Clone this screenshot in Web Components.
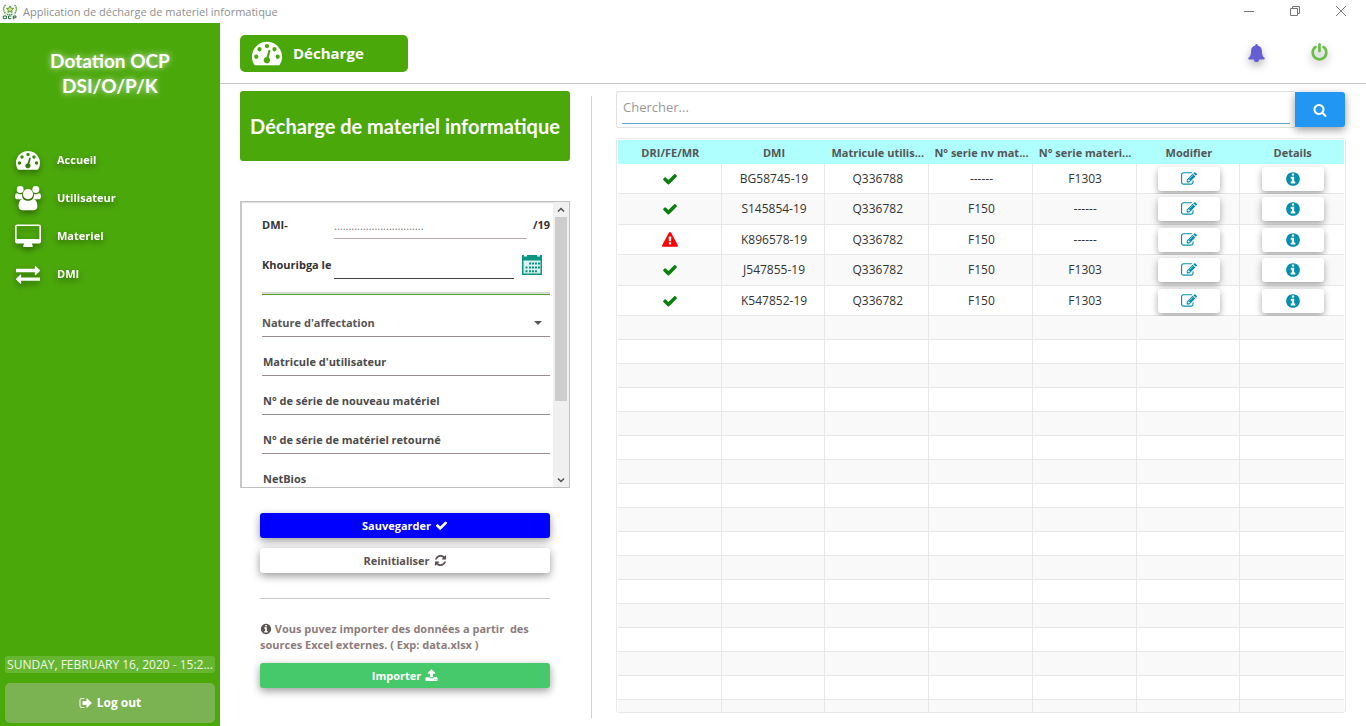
<!DOCTYPE html>
<html lang="fr">
<head>
<meta charset="utf-8">
<title>Application de décharge de materiel informatique</title>
<style>
  :root {
    --green: #4ba80b;
    --teal: #048fae;
    --line: #c8c8c8;
    --grid: #e8e8e8;
    --shadow: 0 3px 8px rgba(0, 0, 0, .4);
  }
  body { margin: 0; font: 12px/16px "Open Sans", "Noto Sans", sans-serif; color: #333; background: #fff; }
</style>
</head>
<body>
<oc-app></oc-app>

<script>
const define = (name, html, setup) => {
  const tpl = document.createElement('template');
  tpl.innerHTML = html.trim();
  customElements.define(name, class extends HTMLElement {
    constructor() {
      super();
      this.attachShadow({ mode: 'open' }).append(tpl.content.cloneNode(true));
    }
    connectedCallback() { if (setup) setup(this, this.shadowRoot); }
  });
};

/* ---------- icons ---------- */
const P = d => ['0 0 1792 1792', `<path d="${d}"/>`];
const ICONS = {
  check: P('M1671 566q0 40-28 68l-724 724-136 136q-28 28-68 28t-68-28l-136-136-362-362q-28-28-28-68t28-68l136-136q28-28 68-28t68 28l294 295 656-657q28-28 68-28t68 28l136 136q28 28 28 68z'),
  search: P('M1216 832q0-185-131.5-316.5t-316.5-131.5-316.5 131.5-131.5 316.5 131.5 316.5 316.5 131.5 316.5-131.5 131.5-316.5zm512 832q0 52-38 90t-90 38q-54 0-90-38l-343-342q-179 124-399 124-143 0-273.5-55.5t-225-150-150-225-55.5-273.5 55.5-273.5 150-225 225-150 273.5-55.5 273.5 55.5 225 150 150 225 55.5 273.5q0 220-124 399l343 343q37 37 37 90z'),
  info: P('M1152 1376v-160q0-14-9-23t-23-9h-96v-512q0-14-9-23t-23-9h-320q-14 0-23 9t-9 23v160q0 14 9 23t23 9h96v320h-96q-14 0-23 9t-9 23v160q0 14 9 23t23 9h448q14 0 23-9t9-23zm-128-896v-160q0-14-9-23t-23-9h-192q-14 0-23 9t-9 23v160q0 14 9 23t23 9h192q14 0 23-9t9-23zm640 416q0 209-103 385.5t-279.5 279.5-385.5 103-385.5-103-279.5-279.5-103-385.5 103-385.5 279.5-279.5 385.5-103 385.5 103 279.5 279.5 103 385.5z'),
  power: P('M1664 896q0 156-61 298t-164 245-245 164-298 61-298-61-245-164-164-245-61-298q0-182 80.5-343t226.5-270q43-32 95.5-25t83.5 50q32 42 24.5 94.5t-49.5 84.5q-98 74-151.5 181t-53.5 228q0 104 40.5 198.5t109.5 163.5 163.5 109.5 198.5 40.5 198.5-40.5 163.5-109.5 109.5-163.5 40.5-198.5q0-121-53.5-228t-151.5-181q-42-32-49.5-84.5t24.5-94.5q31-43 84-50t95 25q146 109 226.5 270t80.5 343zm-640-768v640q0 52-38 90t-90 38-90-38-38-90v-640q0-52 38-90t90-38 90 38 38 90z'),
  warning: P('M1024 1375v-190q0-14-9.5-23.5t-22.5-9.5h-192q-13 0-22.5 9.5t-9.5 23.5v190q0 14 9.5 23.5t22.5 9.5h192q13 0 22.5-9.5t9.5-23.5zm-2-374l18-459q0-12-10-19-13-11-24-11h-220q-11 0-24 11-10 7-10 21l17 457q0 10 10 16.5t24 6.5h185q14 0 23.5-6.5t10.5-16.5zm-14-934l768 1408q35 63-2 126-17 29-46.5 46t-63.5 17h-1536q-34 0-63.5-17t-46.5-46q-37-63-2-126l768-1408q17-31 47-49t65-18 65 18 47 49z'),
  signout: P('M704 1440q0 4 1 20t.5 26.5-3 23.5-10 19.5-20.5 6.5h-320q-119 0-203.5-84.5t-84.5-203.5v-704q0-119 84.5-203.5t203.5-84.5h320q13 0 22.5 9.5t9.5 22.5q0 4 1 20t.5 26.5-3 23.5-10 19.5-20.5 6.5h-320q-66 0-113 47t-47 113v704q0 66 47 113t113 47h312l11.5 1 11.5 3 8 5.5 7 9 2 13.5zm928-544q0 26-19 45l-544 544q-19 19-45 19t-45-19-19-45v-288h-448q-26 0-45-19t-19-45v-384q0-26 19-45t45-19h448v-288q0-26 19-45t45-19 45 19l544 544q19 19 19 45z'),
  upload: P('M1344 1472q0-26-19-45t-45-19-45 19-19 45 19 45 45 19 45-19 19-45zm256 0q0-26-19-45t-45-19-45 19-19 45 19 45 45 19 45-19 19-45zm128-224v320q0 40-28 68t-68 28h-1472q-40 0-68-28t-28-68v-320q0-40 28-68t68-28h427q21 56 70.5 92t110.5 36h256q61 0 110.5-36t70.5-92h427q40 0 68 28t28 68zm-325-648q-17 40-59 40h-256v448q0 26-19 45t-45 19h-256q-26 0-45-19t-19-45v-448h-256q-42 0-59-40-17-39 14-69l448-448q18-19 45-19t45 19l448 448q31 30 14 69z'),
  refresh: P('M1639 1056q0 5-1 7-64 268-268 434.5t-478 166.5q-146 0-282.5-55t-243.5-157l-129 129q-19 19-45 19t-45-19-19-45v-448q0-26 19-45t45-19h448q26 0 45 19t19 45-19 45l-137 137q71 66 161 102t187 36q134 0 250-65t186-179q11-17 53-117 8-23 30-23h192q13 0 22.5 9.5t9.5 22.5zm25-800v448q0 26-19 45t-45 19h-448q-26 0-45-19t-19-45 19-45l138-138q-148-137-349-137-134 0-250 65t-186 179q-11 17-53 117-8 23-30 23h-199q-13 0-22.5-9.5t-9.5-22.5v-7q65-268 270-434.5t480-166.5q146 0 284 55.5t245 156.5l130-129q19-19 45-19t45 19 19 45z'),
  edit: P('M888 1184l116-116-152-152-116 116v56h96v96h56zm440-720q-16-16-33 1l-350 350q-17 17-1 33t33-1l350-350q17-17 1-33zm80 594v190q0 119-84.5 203.5t-203.5 84.5h-832q-119 0-203.5-84.5t-84.5-203.5v-832q0-119 84.5-203.5t203.5-84.5h832q63 0 117 25 15 7 18 23 3 17-9 29l-49 49q-14 14-32 8-23-6-45-6h-832q-66 0-113 47t-47 113v832q0 66 47 113t113 47h832q66 0 113-47t47-113v-126q0-13 9-22l64-64q15-15 35-7t20 29zm-96-738l288 288-672 672h-288v-288zm444 132l-92 92-288-288 92-92q28-28 68-28t68 28l152 152q28 28 28 68t-28 68z'),
  exchange: P('M1792 1184v192q0 13-9.5 22.5t-22.5 9.5h-1376v192q0 13-9.5 22.5t-22.5 9.5q-12 0-24-10l-319-320q-9-9-9-22 0-14 9-23l320-320q9-9 23-9 13 0 22.5 9.5t9.5 22.5v192h1376q13 0 22.5 9.5t9.5 22.5zm0-544q0 14-9 23l-320 320q-9 9-23 9-13 0-22.5-9.5t-9.5-22.5v-192h-1376q-13 0-22.5-9.5t-9.5-22.5v-192q0-13 9.5-22.5t22.5-9.5h1376v-192q0-14 9-23t23-9q12 0 24 10l319 319q9 9 9 23z'),
  gauge: ['0 0 28 28', `<path fill-rule="evenodd" d="M14 3.500A14 14 0 0 0 0 17.500c0 2.700.8 5.200 2.100 7.400.2.300.5.500.9.500h22c.4 0 .7-.2.900-.5A14 14 0 0 0 14 3.500zM4 15.500a2 2 0 1 1 0 4 2 2 0 0 1 0-4zM7 8.500a2 2 0 1 1 0 4 2 2 0 0 1 0-4zM14 5.500a2 2 0 1 1 0 4 2 2 0 0 1 0-4zM21 8.500a2 2 0 1 1 0 4 2 2 0 0 1 0-4zM24 15.500a2 2 0 1 1 0 4 2 2 0 0 1 0-4zM16.500 11c.5.100.8.700.7 1.200l-1.600 6a3 3 0 1 1-2-.5l1.700-6c.1-.5.700-.8 1.200-.7z"/>`],
  users: ['0 0 30 30', `<circle cx="6" cy="5.200" r="4"/><circle cx="24" cy="5.200" r="4"/><path d="M2.500 9.500c1 .8 2 1.200 3.500 1.200.8 0 1.500-.1 2.200-.4-.3 2.300.3 4.400 1.700 6.200H3.500C1.300 16.500 0 15.300 0 13.500 0 12 .4 8.700 2.500 9.500zM27.500 9.500c-1 .8-2 1.200-3.500 1.200-.8 0-1.500-.1-2.200-.4.3 2.300-.3 4.400-1.700 6.200h6.400c2.200 0 3.500-1.200 3.500-3 0-1.500-.4-4.800-2.500-4z"/><circle cx="15" cy="10.500" r="5.900"/><path d="M9.300 16.200c1.500 1.300 3.400 2.100 5.700 2.100s4.200-.8 5.700-2.100c4 .3 5.100 4.600 5.100 8.300 0 2.800-1.700 4.500-4.500 4.500H8.700c-2.800 0-4.500-1.700-4.500-4.500 0-3.700 1.100-8 5.100-8.300z"/>`],
  desktop: ['0 0 26 26', `<path fill-rule="evenodd" d="M2 1.500h22a2 2 0 0 1 2 2v15a2 2 0 0 1-2 2h-7c0 1.400.9 1.900.9 2.700 0 .5-.4.800-.9.800H9c-.5 0-.9-.3-.9-.8 0-.8.900-1.300.9-2.700H2a2 2 0 0 1-2-2v-15a2 2 0 0 1 2-2zm-.4 2v12c0 .3.200.5.400.5h22c.200 0 .4-.2.400-.5v-12c0-.3-.2-.5-.4-.5H2c-.200 0-.4.200-.4.500z"/>`],
  bell: ['0 0 20 20', `<path d="M10 1c.7 0 1.200.5 1.200 1.200v.5c3 .6 4.500 2.900 4.500 5.800 0 4.300 1 6 3 7.400.2 1-.4 1.500-1 1.500h-5a2.700 2.700 0 0 1-5.400 0h-5c-.6 0-1.200-.5-1-1.500 2-1.400 3-3.100 3-7.400 0-2.900 1.500-5.200 4.500-5.800v-.5C8.800 1.500 9.300 1 10 1z"/>`],
  calendar: ['0 0 20 20', `<path d="M0 0h2v1.500h3V0h10v1.500h3V0h2v20H0z"/><path d="M1.500 5.500h17v13h-17z" fill="#d9f3ee"/><path d="M7 7.500h2v2H7zm3 0h2v2h-2zm3 0h2v2h-2zm3 0h2v2h-2zM3.500 11.500h2v2h-2zm3.500 0h2v2H7zm3 0h2v2h-2zm3 0h2v2h-2zm3 0h2v2h-2zM3.500 15.200h2v2h-2zm3.500 0h2v2H7zm3 0h2v2h-2zm3 0h2v2h-2z"/>`],
  minimize: ['0 0 12 12', `<path d="M1 6.500h10" fill="none" stroke="currentColor"/>`],
  restore: ['0 0 12 12', `<path d="M1.500 3.500h7v7h-7zM3.500 3.500v-2h7v7h-2" fill="none" stroke="currentColor"/>`],
  close: ['0 0 12 12', `<path d="M1 1l10 10M11 1L1 11" fill="none" stroke="currentColor"/>`],
  up: ['0 0 10 10', `<path d="M2 6.500L5 3.500l3 3" fill="none" stroke="currentColor" stroke-width="1.500"/>`],
  down: ['0 0 10 10', `<path d="M2 3.500l3 3 3-3" fill="none" stroke="currentColor" stroke-width="1.500"/>`],
  crest: ['0 0 18 18', `<path d="M9 2.200l1.200 2.500 2.700.3-2 1.900.5 2.700L9 8.300 6.600 9.600l.5-2.700-2-1.900 2.700-.3z" fill="#dbe36a" stroke="#3f8f3a" stroke-width="1"/><path d="M4 1.200C1.200 3 .8 8 4.500 11.200M14 1.200c2.800 1.800 3.200 6.800-.5 10M5.500 11.800h7" fill="none" stroke="#5c9c50" stroke-width="1.700" stroke-dasharray="1.600 .6"/><path d="M1.500 13.500h3.500v3H1.500zM10.500 13.500H7.300v3h3.200M12.700 17.200v-3.700h3v2h-3" fill="none" stroke="#1d6b33" stroke-width="1.100"/>`]
};
define('oc-icon', `
<style>
  :host { display: inline-block; flex: none; width: var(--size, 14px); height: var(--size, 14px); white-space: normal; }
  svg { display: block; width: 100%; height: 100%; fill: currentColor; overflow: visible; }
</style>`, (el, root) => {
  if (root.querySelector('svg')) return;
  const [box, body] = ICONS[el.getAttribute('name')];
  root.append(document.createRange().createContextualFragment(`<svg viewBox="${box}" aria-hidden="true">${body}</svg>`));
});

/* ---------- window title bar ---------- */
define('oc-titlebar', `
<style>
  :host { display: flex; align-items: center; height: 23px; padding: 0 19px 0 2px; gap: 5px; color: #8f8f8f; --size: 16px; }
  h1 { flex: 1; margin: 0; font-size: 11px; font-weight: 400; line-height: 22px; }
  nav { display: flex; gap: 34px; --size: 12px; padding-bottom: 1px; }
  button { display: block; padding: 0; border: 0; background: none; color: #777; }
  oc-icon { display: block; }
</style>
<oc-icon name="crest"></oc-icon>
<h1><slot></slot></h1>
<nav aria-label="Fenêtre">
  <button aria-label="Réduire"><oc-icon name="minimize"></oc-icon></button>
  <button aria-label="Restaurer"><oc-icon name="restore"></oc-icon></button>
  <button aria-label="Fermer"><oc-icon name="close"></oc-icon></button>
</nav>`);

/* ---------- sidebar ---------- */
define('oc-nav-item', `
<style>
  :host { display: block; }
  a { display: grid; grid-template-columns: 26px 1fr; align-items: center; column-gap: 16px; height: 38px; padding-left: 15px;
      color: #fff; text-decoration: none; font-size: 11px; font-weight: 700; filter: drop-shadow(0 3px 3px rgba(0, 0, 0, .4)); --size: 26px; }
  oc-icon { justify-self: center; }
  oc-icon[name="gauge"], oc-icon[name="exchange"] { --size: 24px; }
</style>
<a href="#"><span><slot></slot></span></a>`, (el, root) => {
  if (root.querySelector('oc-icon')) return;
  const icon = document.createElement('oc-icon');
  icon.setAttribute('name', el.getAttribute('icon'));
  root.querySelector('a').prepend(icon);
});
define('oc-sidebar', `
<style>
  :host { display: flex; flex-direction: column; background: var(--green); color: #fff; padding: 25px 5px 3px; box-sizing: border-box; }
  h2 { margin: 0 0 43px; font: 700 19px/25px Lato, sans-serif; text-align: center; text-shadow: 0 0 6px rgba(255, 255, 255, .8); }
  nav { flex: 1; margin: 0 -5px; }
  .date { height: 17px; margin-bottom: 10px; border-radius: 3px; background: rgba(255, 255, 255, .16);
          font-size: 12px; line-height: 17px; text-align: center; white-space: nowrap; color: #eef7e8; }
  .out { display: flex; align-items: center; justify-content: center; gap: 4px; height: 40px; border: 0; border-radius: 5px;
         background: #7bb352; color: #fff; font: inherit; font-weight: 700; }
</style>
<h2>Dotation OCP<br>DSI/O/P/K</h2>
<nav>
  <oc-nav-item icon="gauge">Accueil</oc-nav-item>
  <oc-nav-item icon="users">Utilisateur</oc-nav-item>
  <oc-nav-item icon="desktop">Materiel</oc-nav-item>
  <oc-nav-item icon="exchange">DMI</oc-nav-item>
</nav>
<div class="date">SUNDAY, FEBRUARY 16, 2020 - 15:2...</div>
<button class="out"><oc-icon name="signout"></oc-icon>Log out</button>`);

/* ---------- top bar ---------- */
define('oc-topbar', `
<style>
  :host { display: flex; align-items: center; justify-content: space-between; box-sizing: border-box; height: 61px; padding: 0 37px 0 20px; border-bottom: 1px solid var(--line); }
  button { padding: 0; border: 0; background: none; font: inherit; }
  .page { display: flex; align-items: center; gap: 11px; width: 168px; height: 37px; padding-left: 12px; border-radius: 5px; background: var(--green);
          color: #fff; font-size: 15px; font-weight: 700; --size: 30px; }
  .tools { display: flex; gap: 44px; padding-bottom: 2px; --size: 19px; }
  .tools button { filter: drop-shadow(0 4px 4px rgba(0, 0, 0, .3)); }
  .bell { color: #655fd3; }
  .power { color: #6abf4b; }
  .tools oc-icon { display: block; }
</style>
<button class="page"><oc-icon name="gauge"></oc-icon>Décharge</button>
<div class="tools">
  <button class="bell" aria-label="Notifications"><oc-icon name="bell"></oc-icon></button>
  <button class="power" aria-label="Quitter"><oc-icon name="power"></oc-icon></button>
</div>`);

/* ---------- generic raised button ---------- */
define('oc-button', `
<style>
  :host { display: block; }
  button { display: flex; align-items: center; justify-content: center; gap: 4px; width: 100%; height: 25px; padding: 0; border: 0; border-radius: 3px;
           background: var(--bg, #fff); color: var(--fg, #fff); font: inherit; font-size: 11px; font-weight: 700; box-shadow: var(--shadow); --size: 13px; }
</style>
<button><slot></slot></button>`);

/* ---------- form ---------- */
define('oc-field', `
<style>
  :host { display: block; }
  input { display: block; box-sizing: border-box; width: 100%; height: 39px; padding: 11px 1px 0; border: 0; border-bottom: 1px solid #9c8c90;
          border-radius: 0; outline: 0; background: none; font: inherit; font-size: 11px; font-weight: 700; color: #444; }
  input::placeholder { color: #4a4a4a; opacity: 1; }
</style>
<input type="text">`, (el, root) => {
  const i = root.querySelector('input');
  i.placeholder = el.getAttribute('label');
  i.setAttribute('aria-label', el.getAttribute('label'));
});
define('oc-scrollbar', `
<style>
  :host { display: flex; flex-direction: column; flex: none; width: 16px; background: #f0f0f0; --size: 10px; color: #505050; }
  button { display: grid; place-items: center; height: 15px; padding: 0; border: 0; background: none; color: inherit; }
  .track { flex: 1; padding: 0 2px; }
  .thumb { height: 72%; background: #cdcdcd; }
</style>
<button aria-label="Monter"><oc-icon name="up"></oc-icon></button>
<div class="track"><div class="thumb"></div></div>
<button aria-label="Descendre"><oc-icon name="down"></oc-icon></button>`);
define('oc-form', `
<style>
  :host { display: flex; box-sizing: border-box; height: 287px; border: 1px solid #c0c0c0; border-left: 2px solid #c8c8c8; box-shadow: inset 0 1px 1px #ddd; overflow: hidden; }
  form { flex: 1; min-width: 0; padding: 0 3px 0 20px; overflow: hidden; font-weight: 700; font-size: 11px; }
  .row { display: grid; align-items: end; grid-template-columns: 72px 1fr auto; }
  .row label, .row span { padding-bottom: 6px; white-space: nowrap; }
  .row input { min-width: 0; padding: 0 0 2px; border: 0; outline: 0; border-radius: 0; border-bottom: 1px solid #c0a9ac; background: none; font: inherit; font-weight: 400; color: #999; }
  .dmi { height: 37px; }
  .dmi span { padding-left: 6px; }
  .dmi input { height: 22px; }
  .date { height: 40px; }
  .date input { height: 22px; border-color: #444; }
  .date button { padding: 0; border: 0; margin: 0 8px 4px; background: none; color: #0a9683; --size: 20px; }
  .date oc-icon { display: block; }
  hr { height: 1px; margin: 13px 0 0; border: 0; border-top: 1px solid #d5dccf; border-bottom: 1px solid #5aa02c; background: #d5dccf; }
  .pick { position: relative; }
  select { display: block; box-sizing: border-box; width: 100%; height: 42px; padding: 14px 0 0; appearance: none; border: 0; border-bottom: 1px solid #9c8c90;
           border-radius: 0; background: none; font: inherit; color: #555; }
  .pick::after { content: ""; position: absolute; right: 8px; bottom: 12px; border: 4px solid transparent; border-top-color: #555; border-bottom: 0; }
</style>
<form>
  <div class="row dmi"><label for="dmi">DMI-</label><input id="dmi" placeholder="..............................."><span>/19</span></div>
  <div class="row date"><label for="date">Khouribga le</label><input id="date"><button type="button" aria-label="Choisir la date"><oc-icon name="calendar"></oc-icon></button></div>
  <hr>
  <div class="pick"><select aria-label="Nature d'affectation"><option>Nature d'affectation</option></select></div>
  <oc-field label="Matricule d'utilisateur"></oc-field>
  <oc-field label="N° de série de nouveau matériel"></oc-field>
  <oc-field label="N° de série de matériel retourné"></oc-field>
  <oc-field label="NetBios"></oc-field>
</form>
<oc-scrollbar></oc-scrollbar>`);
define('oc-discharge', `
<style>
  :host { display: block; box-sizing: border-box; padding: 7px 21px 0 20px; }
  h2 { margin: 0 0 40px; border-radius: 3px; background: var(--green); color: #fff; font: 700 20px/70px Lato, sans-serif; text-align: center; white-space: nowrap; }
  .actions { display: grid; gap: 10px; padding: 25px 20px 0; }
  hr { width: 100%; height: 1px; margin: 15px 0 12px; border: 0; background: var(--line); }
  p { margin: 0; font-size: 11px; font-weight: 700; color: #8b7d7d; --size: 12px; white-space: pre-line; }
  p oc-icon { vertical-align: -2px; color: #5e5353; }
  .save { --bg: #0000fe; }
  .reset { --fg: #5a5050; }
  .import { --bg: #46c96b; }
</style>
<h2>Décharge de materiel informatique</h2>
<oc-form></oc-form>
<div class="actions">
  <oc-button class="save">Sauvegarder <oc-icon name="check"></oc-icon></oc-button>
  <oc-button class="reset">Reinitialiser <oc-icon name="refresh"></oc-icon></oc-button>
  <hr>
  <p><oc-icon name="info"></oc-icon> Vous puvez importer des données a partir &nbsp;des
sources Excel externes. ( Exp: data.xlsx )</p>
  <oc-button class="import">Importer <oc-icon name="upload"></oc-icon></oc-button>
</div>`);

/* ---------- search ---------- */
define('oc-search', `
<style>
  :host { display: flex; align-items: center; height: 37px; }
  .box { flex: 1; box-sizing: border-box; height: 37px; padding: 1px 5px 3px; border: 1px solid #e0e0e0; border-right: 0; border-radius: 3px 0 0 3px; }
  input { display: block; box-sizing: border-box; width: 100%; height: 31px; padding: 0 1px 2px; border: 0; border-bottom: 1px solid #5ba7cb; outline: 0; border-radius: 0; background: none; font: inherit; font-size: 13px; }
  input::placeholder { color: #9a9a9a; opacity: 1; }
  button { display: grid; place-items: center; width: 50px; height: 35px; margin-right: 1px; padding: 0; border: 0; border-radius: 0 3px 3px 0; background: #2196f3; color: #fff; box-shadow: var(--shadow); --size: 14px; }
</style>
<div class="box"><input type="text" placeholder="Chercher..." aria-label="Chercher"></div>
<button aria-label="Chercher"><oc-icon name="search"></oc-icon></button>`);

/* ---------- table ---------- */
define('oc-table', `
<style>
  :host { display: block; box-sizing: border-box; border: 1px solid var(--grid); border-radius: 3px; padding: 1px 1px 0; overflow: hidden; }
  table { width: 100%; table-layout: fixed; border-collapse: separate; border-spacing: 0; }
  th { box-sizing: border-box; height: 24px; padding: 1px 0 0 1px; background: #afffff; color: #555; font-size: 11px; font-weight: 700; white-space: nowrap; overflow: hidden; }
  td { box-sizing: border-box; height: 24px; padding: 0 0 0 2px; border-right: 1px solid var(--grid); border-bottom: 1px solid var(--grid); text-align: center; white-space: nowrap; }
  td:last-child { border-right: 0; }
  tr.data td { height: 30px; }
  tr.data:nth-child(even) td { height: 31px; }
  tr:nth-child(even) td { background: #f9f9f9; }
  td > oc-icon { display: block; margin: 0 auto; }
  .ok, .bad { color: #0a7f10; --size: 16px; }
  .bad { color: #f00; }
  td button { display: grid; place-items: center; width: 62px; height: 24px; margin: 0 auto; padding: 0; border: 0; border-radius: 3px; background: #fff; color: var(--teal);
              box-shadow: 0 3px 7px rgba(0, 0, 0, .35); --size: 16px; }
</style>
<table>
  <thead><tr><th>DRI/FE/MR</th><th>DMI</th><th>Matricule utilis...</th><th>N° serie nv mat...</th><th>N° serie materi...</th><th>Modifier</th><th>Details</th></tr></thead>
  <tbody></tbody>
</table>`, (el, root) => {
  const none = '------';
  const rows = [
    [1, 'BG58745-19', 'Q336788', none, 'F1303'],
    [1, 'S145854-19', 'Q336782', 'F150', none],
    [0, 'K896578-19', 'Q336782', 'F150', none],
    [1, 'J547855-19', 'Q336782', 'F150', 'F1303'],
    [1, 'K547852-19', 'Q336782', 'F150', 'F1303']
  ];
  const data = rows.map(([ok, ...cells]) => `<tr class="data">
    <td>${ok ? '<oc-icon class="ok" name="check"></oc-icon>' : '<oc-icon class="bad" name="warning"></oc-icon>'}</td>
    ${cells.map(c => `<td>${c}</td>`).join('')}
    <td><button aria-label="Modifier"><oc-icon name="edit"></oc-icon></button></td>
    <td><button aria-label="Details"><oc-icon name="info"></oc-icon></button></td></tr>`).join('');
  const empty = `<tr>${'<td></td>'.repeat(7)}</tr>`.repeat(17);
  root.querySelector('tbody').innerHTML = data + empty;
});

/* ---------- page ---------- */
define('oc-app', `
<style>
  :host { display: grid; grid-template: auto 1fr / 220px minmax(0, 1fr); height: 100vh; overflow: hidden; }
  oc-titlebar { grid-column: 1 / -1; }
  main { display: grid; grid-template: auto minmax(0, 1fr) / 371px minmax(0, 1fr); min-height: 0; }
  oc-topbar { grid-column: 1 / -1; }
  .list { display: flex; flex-direction: column; gap: 10px; min-height: 0; margin: 12px 0 8px; padding: 0 20px 5px 24px; border-left: 1px solid #d0d0d0; }
  oc-search { margin-top: -5px; }
  oc-table { flex: 1; min-height: 0; }
</style>
<oc-titlebar>Application de décharge de materiel informatique</oc-titlebar>
<oc-sidebar></oc-sidebar>
<main>
  <oc-topbar></oc-topbar>
  <oc-discharge></oc-discharge>
  <section class="list">
    <oc-search></oc-search>
    <oc-table></oc-table>
  </section>
</main>`);
</script>
</body>
</html>
